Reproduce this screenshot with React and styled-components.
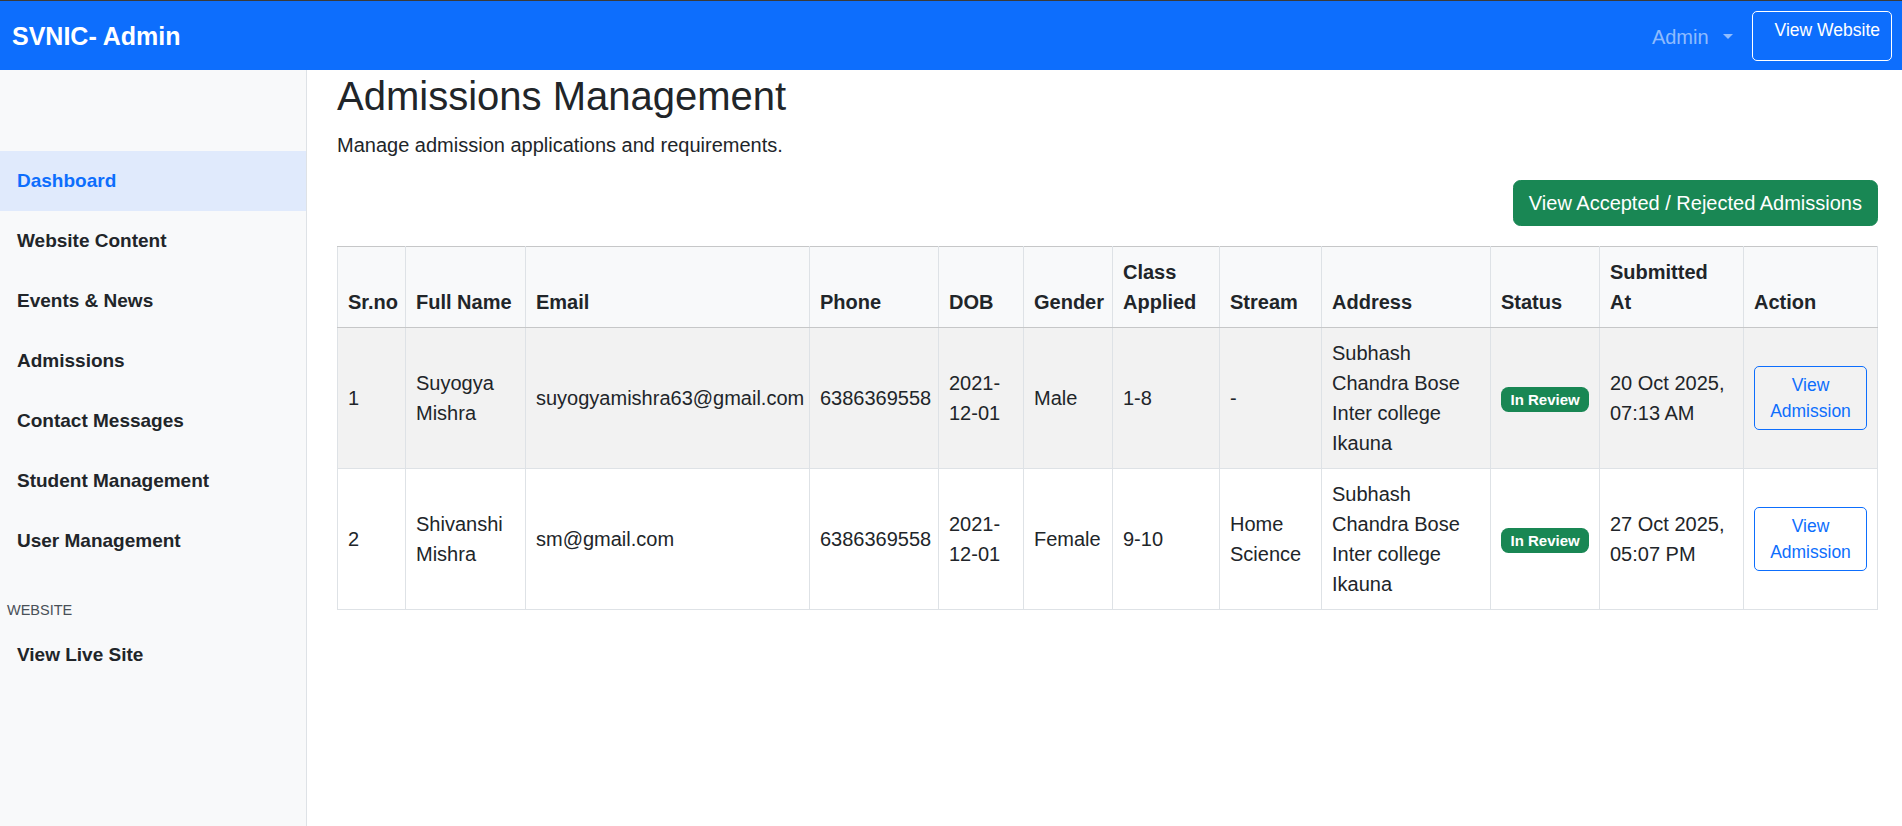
import React from "react";
import styled, { createGlobalStyle } from "styled-components";

const GlobalStyle = createGlobalStyle`
  * { box-sizing: border-box; }
  body {
    margin: 0;
    font-family: "Liberation Sans", Arial, sans-serif;
    font-size: 20px;
    line-height: 30px;
    color: #212529;
    background: #fff;
  }
`;

const Navbar = styled.nav`
  height: 70px;
  border-top: 1px solid #3a3a3a;
  background-color: #0d6efd;
  display: flex;
  justify-content: space-between;
  align-items: center;
  padding: 0 10px 0 12px;
`;

const Brand = styled.div`
  color: #fff;
  font-size: 25px;
  font-weight: 700;
  line-height: 30px;
`;

const NavRight = styled.div`
  display: flex;
  align-items: center;
  gap: 19px;
`;

const Dropdown = styled.div`
  display: flex;
  align-items: center;
  color: rgba(255, 255, 255, 0.55);
  font-size: 20px;
  line-height: 30px;
  margin-top: 2px;
`;

const Caret = styled.span`
  margin-left: 14px;
  width: 0;
  height: 0;
  border-left: 5px solid transparent;
  border-right: 5px solid transparent;
  border-top: 5px solid rgba(255, 255, 255, 0.55);
`;

const OutlineLightButton = styled.button`
  height: 50px;
  display: flex;
  align-items: flex-start;
  padding: 5px 11px 5px 22px;
  border: 1px solid #fff;
  border-radius: 5px;
  background: transparent;
  color: #fff;
  font-family: inherit;
  font-size: 17.5px;
  line-height: 26px;
`;

const Layout = styled.div`
  display: flex;
  min-height: calc(100vh - 70px);
`;

const Sidebar = styled.aside`
  width: 307px;
  flex-shrink: 0;
  background: #f8f9fa;
  border-right: 1px solid #dee2e6;
  padding-top: 81px;
`;

const NavItem = styled.div`
  height: 60px;
  display: flex;
  align-items: center;
  padding: 0 17px;
  font-size: 19px;
  font-weight: 600;
  color: ${(p) => (p.$active ? "#0d6efd" : "#212529")};
  background: ${(p) => (p.$active ? "#e0eafc" : "transparent")};
`;

const SectionLabel = styled.div`
  margin: 28px 0 4px;
  padding-left: 7px;
  font-size: 14.5px;
  line-height: 22px;
  color: #495057;
  text-transform: uppercase;
`;

const Main = styled.main`
  flex: 1;
  padding: 2px 25px 0 30px;
`;

const Title = styled.h2`
  margin: 0 0 10px;
  font-size: 40px;
  line-height: 48px;
  font-weight: 500;
`;

const Lead = styled.p`
  margin: 0 0 20px;
`;

const Actions = styled.div`
  display: flex;
  justify-content: flex-end;
  margin-bottom: 20px;
`;

const SuccessButton = styled.button`
  padding: 7px 15px;
  border: 1px solid #198754;
  border-radius: 7.5px;
  background: #198754;
  color: #fff;
  font-family: inherit;
  font-size: 20px;
  line-height: 30px;
`;

const Table = styled.table`
  width: 100%;
  table-layout: fixed;
  border-collapse: collapse;
`;

const Th = styled.th`
  padding: 10px;
  text-align: left;
  vertical-align: bottom;
  font-weight: 700;
  background: #f8f9fa;
  border: 1px solid #dee2e6;
  border-top-color: #c6c7c8;
  border-bottom-color: #c6c7c8;
`;

const Tr = styled.tr`
  background: ${(p) => (p.$striped ? "#f2f2f2" : "#fff")};
`;

const Td = styled.td`
  padding: 10px;
  vertical-align: middle;
  border: 1px solid #dee2e6;
`;

const Badge = styled.span`
  display: inline-block;
  white-space: nowrap;
  padding: 5px 9.5px;
  border-radius: 7.5px;
  background: #198754;
  color: #fff;
  font-size: 15px;
  font-weight: 700;
  line-height: 15px;
`;

const OutlineButton = styled.button`
  padding: 5px 10px;
  border: 1px solid #0d6efd;
  border-radius: 5px;
  background: transparent;
  color: #0d6efd;
  font-family: inherit;
  font-size: 17.5px;
  line-height: 26.25px;
  text-align: center;
`;

const columns = [
  { label: "Sr.no", w: 68 },
  { label: "Full Name", w: 120 },
  { label: "Email", w: 284 },
  { label: "Phone", w: 129 },
  { label: "DOB", w: 85 },
  { label: "Gender", w: 89 },
  { label: "Class Applied", w: 107 },
  { label: "Stream", w: 102 },
  { label: "Address", w: 169 },
  { label: "Status", w: 109 },
  { label: "Submitted At", w: 144 },
  { label: "Action", w: 134 },
];

const rows = [
  {
    id: 1,
    name: "Suyogya Mishra",
    email: "suyogyamishra63@gmail.com",
    phone: "6386369558",
    dob: "2021-12-01",
    gender: "Male",
    cls: "1-8",
    stream: "-",
    address: "Subhash Chandra Bose Inter college Ikauna",
    submitted: "20 Oct 2025, 07:13 AM",
  },
  {
    id: 2,
    name: "Shivanshi Mishra",
    email: "sm@gmail.com",
    phone: "6386369558",
    dob: "2021-12-01",
    gender: "Female",
    cls: "9-10",
    stream: "Home Science",
    address: "Subhash Chandra Bose Inter college Ikauna",
    submitted: "27 Oct 2025, 05:07 PM",
  },
];

const menu = [
  "Dashboard",
  "Website Content",
  "Events & News",
  "Admissions",
  "Contact Messages",
  "Student Management",
  "User Management",
];

export default function App() {
  return (
    <>
      <GlobalStyle />
      <Navbar>
        <Brand>SVNIC- Admin</Brand>
        <NavRight>
          <Dropdown>
            Admin
            <Caret />
          </Dropdown>
          <OutlineLightButton>View Website</OutlineLightButton>
        </NavRight>
      </Navbar>

      <Layout>
        <Sidebar>
          {menu.map((m, i) => (
            <NavItem key={m} $active={i === 0}>
              {m}
            </NavItem>
          ))}
          <SectionLabel>Website</SectionLabel>
          <NavItem>View Live Site</NavItem>
        </Sidebar>

        <Main>
          <Title>Admissions Management</Title>
          <Lead>Manage admission applications and requirements.</Lead>
          <Actions>
            <SuccessButton>View Accepted / Rejected Admissions</SuccessButton>
          </Actions>

          <Table>
            <colgroup>
              {columns.map((c) => (
                <col key={c.label} style={{ width: c.w }} />
              ))}
            </colgroup>
            <thead>
              <tr>
                {columns.map((c) => (
                  <Th key={c.label}>{c.label}</Th>
                ))}
              </tr>
            </thead>
            <tbody>
              {rows.map((r, i) => (
                <Tr key={r.id} $striped={i % 2 === 0}>
                  <Td>{r.id}</Td>
                  <Td>{r.name}</Td>
                  <Td>{r.email}</Td>
                  <Td>{r.phone}</Td>
                  <Td>{r.dob}</Td>
                  <Td>{r.gender}</Td>
                  <Td>{r.cls}</Td>
                  <Td>{r.stream}</Td>
                  <Td>{r.address}</Td>
                  <Td>
                    <Badge>In Review</Badge>
                  </Td>
                  <Td>{r.submitted}</Td>
                  <Td>
                    <OutlineButton>View Admission</OutlineButton>
                  </Td>
                </Tr>
              ))}
            </tbody>
          </Table>
        </Main>
      </Layout>
    </>
  );
}
